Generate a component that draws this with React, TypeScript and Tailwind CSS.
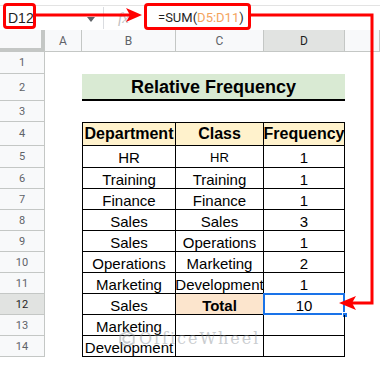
import React from "react";

type Row = {
  n: number;
  b?: string;
  c?: string;
  d?: string;
};

const rows: Row[] = [
  { n: 5, b: "HR", c: "HR", d: "1" },
  { n: 6, b: "Training", c: "Training", d: "1" },
  { n: 7, b: "Finance", c: "Finance", d: "1" },
  { n: 8, b: "Sales", c: "Sales", d: "3" },
  { n: 9, b: "Sales", c: "Operations", d: "1" },
  { n: 10, b: "Operations", c: "Marketing", d: "2" },
  { n: 11, b: "Marketing", c: "Development", d: "1" },
  { n: 12, b: "Sales", c: "Total", d: "10" },
  { n: 13, b: "Marketing", c: "", d: "" },
  { n: 14, b: "Development", c: "", d: "" }
];

const arial = { fontFamily: "'Liberation Sans', Arial, sans-serif" };

const RowHead = ({ n, active = false }: { n: number; active?: boolean }) => (
  <div
    className={`flex items-center justify-center border-r border-b border-[#c4c7c5] text-[11px] leading-none ${
      active ? "bg-[#e1e3e1] text-[#1f1f1f]" : "bg-[#f8f9fa] text-[#5f6368]"
    }`}
  >
    {n}
  </div>
);

export default function App() {
  return (
    <div className="relative h-[381px] w-[380px] overflow-hidden bg-white" style={arial}>
      {/* formula bar */}
      <div className="mt-[5px] flex h-[25px] items-center border-t border-[#e3e3e3] bg-white">
        <div className="flex w-[103px] items-center justify-between pl-[8px] pr-[8px] text-[14px] text-[#1f1f1f]">
          <span>D12</span>
          <span className="mt-[3px] h-0 w-0 border-x-[4px] border-t-[5px] border-x-transparent border-t-[#5f6368]" />
        </div>
        <div className="h-[22px] w-px bg-[#dadce0]" />
        <div className="w-[40px] pl-[14px] text-[15px] italic text-[#c0c0c0]" style={{ fontFamily: "'Liberation Serif', serif" }}>
          fx
        </div>
        <div className="pl-[14px] text-[13px] text-[#1f1f1f]" style={{ fontFamily: "Roboto, sans-serif" }}>
          =SUM(<span className="text-[#f4a460]">D5:D11</span>)
        </div>
      </div>

      {/* sheet grid */}
      <div
        className="grid grid-cols-[45px_37px_94px_88px_81px_1fr] grid-rows-[22px_22px_27px_21px_24px_22px_21px_21px_21px_21px_21px_21px_21px_21px_21px]"
        style={{ fontFamily: "Roboto, sans-serif" }}
      >
        {/* column headers */}
        <div className="border-r-4 border-b-4 border-[#c4c7c5] bg-[#f8f9fa]" />
        {["A", "B", "C", "D", ""].map((c) => (
          <div
            key={`col-${c}`}
            className={`flex items-center justify-center border-r border-b border-[#c4c7c5] text-[12px] leading-none ${
              c === "D" ? "bg-[#e1e3e1] text-[#1f1f1f]" : "bg-[#f8f9fa] text-[#5f6368]"
            }`}
          >
            {c}
          </div>
        ))}

        {/* row 1 */}
        <RowHead n={1} />
        <div className="col-span-5" />

        {/* row 2 title */}
        <RowHead n={2} />
        <div />
        <div
          className="col-span-3 flex items-center justify-center border-b-2 border-black bg-[#d9ead3] text-[18px] font-bold leading-none text-black"
          style={arial}
        >
          Relative Frequency
        </div>
        <div />

        {/* row 3 */}
        <RowHead n={3} />
        <div className="col-span-5" />

        {/* row 4 table header */}
        <RowHead n={4} />
        <div />
        {["Department", "Class", "Frequency"].map((t, i) => (
          <div
            key={t}
            className={`flex items-center justify-center border-t border-r border-b border-black bg-[#fff2cc] text-[16px] font-bold leading-none text-black ${
              i === 0 ? "border-l" : ""
            }`}
            style={arial}
          >
            {t}
          </div>
        ))}
        <div />

        {rows.map((r) => (
          <React.Fragment key={`row-${r.n}`}>
            <RowHead n={r.n} active={r.n === 12} />
            <div />
            <div
              className="flex items-center justify-center border-r border-b border-l border-black pt-[2px] text-[15px] leading-none text-black"
              style={arial}
            >
              {r.b}
            </div>
            <div
              className={`flex items-center justify-center border-r border-b border-black pt-[2px] leading-none text-black ${
                r.c === "Total" ? "bg-[#fce5cd] text-[15px] font-bold" : r.c === "HR" ? "text-[13px]" : "text-[15px]"
              }`}
              style={arial}
            >
              {r.c}
            </div>
            <div
              className="relative flex items-center justify-center border-r border-b border-black pt-[2px] text-[15px] leading-none text-black"
              style={arial}
            >
              {r.d}
              {r.n === 12 ? (
                <>
                  <span className="absolute -top-px -left-px -right-px -bottom-px border-2 border-[#1a73e8]" />
                  <span className="absolute -right-[4px] -bottom-[4px] h-[6px] w-[6px] border border-white bg-[#1a73e8]" />
                </>
              ) : null}
            </div>
            <div />
          </React.Fragment>
        ))}
      </div>

      {/* watermark */}
      <div className="pointer-events-none absolute left-[118px] top-[326px] flex items-center gap-[3px] opacity-45">
        <svg viewBox="0 0 24 24" className="h-[26px] w-[18px]" fill="none" stroke="#8a9096" strokeWidth="2.5">
          <path d="M12 2l9 5v10l-9 5-9-5V7z" />
          <path d="M16 9a5 5 0 100 6" />
        </svg>
        <span
          className="text-[16px] tracking-[2px] text-[#8a9096]"
          style={{ fontFamily: "'DejaVu Serif', 'Liberation Serif', serif" }}
        >
          OfficeWheel
        </span>
      </div>

      {/* annotation boxes and arrows */}
      <div className="pointer-events-none absolute left-[3px] top-[3px] h-[26px] w-[33px] rounded-[4px] border-[3px] border-[#ff0000]" />
      <div className="pointer-events-none absolute left-[144px] top-[3px] h-[27px] w-[107px] rounded-[4px] border-[3px] border-[#ff0000]" />
      <svg className="pointer-events-none absolute left-0 top-0" width="380" height="381" viewBox="0 0 380 381">
        <path d="M36 15 H130" stroke="#ff0000" strokeWidth="3" fill="none" />
        <path d="M142 15 L126 8 L130 15 L126 22 Z" fill="#ff0000" />
        <path d="M251 15 H372 V303 H352" stroke="#ff0000" strokeWidth="3" fill="none" />
        <path d="M339 303 L356 296 L352 303 L356 310 Z" fill="#ff0000" />
      </svg>
    </div>
  );
}
